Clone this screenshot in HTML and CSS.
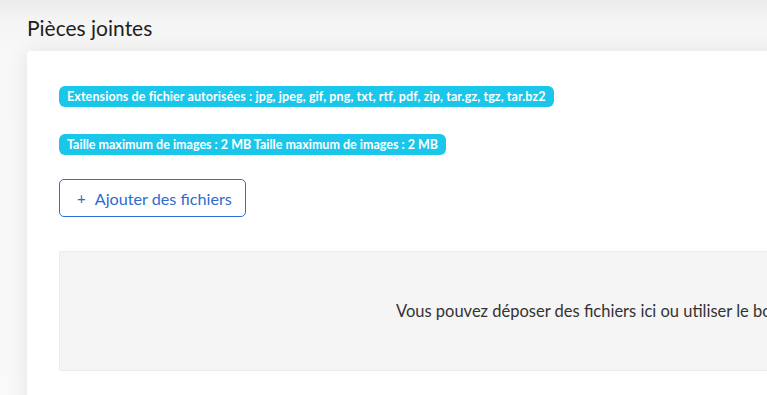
FILE: index.html
```html
<!DOCTYPE html>
<html lang="fr">
<head>
<meta charset="utf-8">
<title>Pièces jointes</title>
<link rel="stylesheet" href="styles.css">
</head>
<body>
<div class="page">
  <h2 class="title">Pièces jointes</h2>
  <div class="card">
    <div class="badges">
      <span class="badge">Extensions de fichier autorisées : jpg, jpeg, gif, png, txt, rtf, pdf, zip, tar.gz, tgz, tar.bz2</span>
      <span class="badge badge-narrow">Taille maximum de images : 2 MB Taille maximum de images : 2 MB</span>
    </div>
    <button class="add-btn" type="button"><span class="plus">+</span>Ajouter des fichiers</button>
    <div class="dropzone">
      <p class="drop-text">Vous pouvez déposer des fichiers ici ou utiliser le bouton ci-dessus</p>
    </div>
  </div>
</div>
</body>
</html>
```
FILE: styles.css
```css
html, body {
  margin: 0;
  padding: 0;
  overflow: hidden;
}
body {
  font-family: Lato, "Open Sans", "Liberation Sans", sans-serif;
  background: linear-gradient(#ebebeb 0px, #f4f4f4 20px, #f8f8f8 50px, #f9f9f9 100%);
  color: #222;
  height: 395px;
}
.page {
  padding: 16px 0 0 27px;
}
.title {
  margin: 0 0 11px 0;
  font-size: 21px;
  font-weight: 400;
  line-height: 24px;
  color: #1f1f1f;
}
.card {
  width: 1218px;
  background: #fff;
  border-radius: 4px 0 0 0;
  box-shadow: 0 0 22px rgba(0, 0, 0, 0.09);
  padding: 35px 32px 40px 32px;
  box-sizing: border-box;
  height: 400px;
}
.badges {
  display: flex;
  flex-direction: column;
  align-items: flex-start;
  gap: 27px;
}
.badge {
  display: inline-block;
  background: #1ac6ea;
  color: #fff;
  font-weight: 700;
  font-size: 12.5px;
  letter-spacing: 0.1px;
  line-height: 21px;
  height: 21px;
  padding: 0 8px;
  border-radius: 6px;
  white-space: nowrap;
}
.badge-narrow {
  letter-spacing: 0;
}
.add-btn {
  margin-top: 24px;
  display: inline-flex;
  align-items: center;
  height: 38px;
  padding: 0 13px 0 17px;
  background: #fff;
  border: 1px solid #2c6fd6;
  border-radius: 5px;
  color: #2c6bd0;
  font-family: inherit;
  font-size: 16.2px;
  cursor: pointer;
}
.plus {
  font-size: 15px;
  margin-right: 9px;
}
.dropzone {
  margin-top: 34px;
  height: 120px;
  box-sizing: border-box;
  background: #f5f5f5;
  border: 1px solid #ebebeb;
  border-radius: 2px;
  display: flex;
  align-items: center;
  justify-content: center;
}
.drop-text {
  margin: 0;
  font-size: 16.5px;
  color: #333;
}
```
